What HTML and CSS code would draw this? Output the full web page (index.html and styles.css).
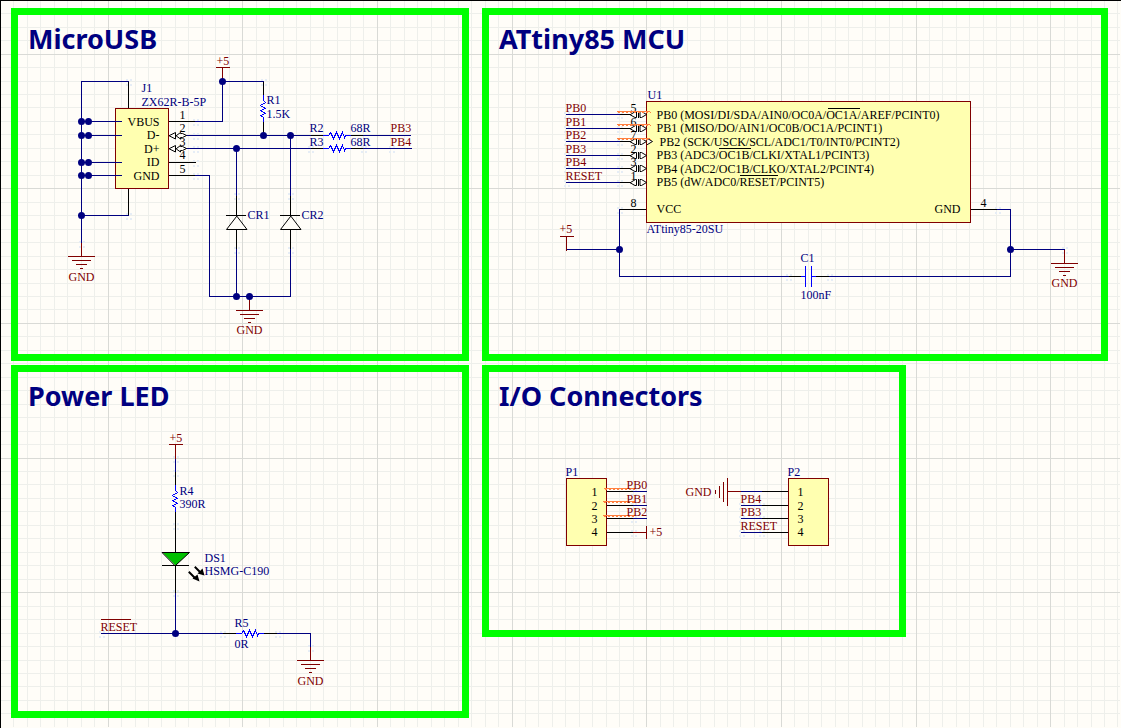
FILE: index.html
```html
<!DOCTYPE html>
<html lang="en">
<head>
<meta charset="utf-8">
<title>ATtiny85 USB board schematic</title>
<link rel="stylesheet" href="styles.css">
</head>
<body>
<svg class="grid" aria-hidden="true"><path class="grid-minor" id="minor"/><path class="grid-major" id="major"/></svg>

<svg class="defs" aria-hidden="true">
  <defs>
    <g id="gnd"><path d="M0 0V13M-13 13H13M-9 17H9M-5 21H5M-1 25H1"/></g>
    <g id="vcc"><path d="M0 0V-14M-6 -14H7"/></g>
    <path id="res-h" d="M0 0H5L7 -3L10 3L13 -3L16 3L19 -3L21 2L22 0H27"/>
    <path id="res-v" d="M0 0V5L2 7L-3 10L2 13L-3 15L2 18L-3 20L0 22V26"/>
    <g id="diode"><path d="M0 -19V0M0 14V33M-10 0H9"/><path class="slant" d="M0 1L-10 14H10Z"/></g>
    <g id="bidir"><path class="slant" d="M-17 0L-12 -3H-11V3H-12ZM-9 -3V3M-7 -3H-6L-1 0L-6 3H-7Z"/></g>
    <g id="usb-io"><path class="slant" d="M1 0L7 -3V3ZM8 0L12 -3V-2H14L18 0L14 2H12V3Z"/></g>
    <path id="hot" d="M-3 -3h2v2h-2zM1 -3h2v2h-2zM-3 2h2v2h-2zM1 2h2v2h-2z"/>
  </defs>
</svg>

<main class="sheet">
  <section class="panel">
    <h2>MicroUSB</h2>
    <svg class="drawing" viewBox="17.5 54.5 444 299" role="img" aria-label="MicroUSB circuit">
      <g class="hot">
        <use href="#hot" x="128" y="81"/><use href="#hot" x="128" y="215"/><use href="#hot" x="195" y="121"/><use href="#hot" x="195" y="135"/><use href="#hot" x="195" y="148"/><use href="#hot" x="195" y="162"/><use href="#hot" x="195" y="175"/><use href="#hot" x="263" y="81"/><use href="#hot" x="236" y="195"/><use href="#hot" x="290" y="195"/><use href="#hot" x="236" y="249"/><use href="#hot" x="290" y="249"/><use href="#hot" x="310" y="148"/><use href="#hot" x="363" y="148"/><use href="#hot" x="391" y="148"/><use href="#hot" x="81" y="243"/>
      </g>
      <rect class="part" x="115" y="108" width="53" height="80"/>
      <path class="wire" d="M128 81H81V243M81 121H121M81 135H121M81 162H121M81 175H121M81 215H128M195 121H222V81H263M186 135H310M186 148H310M363 135H410M363 148H411M195 175H209V296H290V249M290 135V195M236 148V195M236 249V296"/>
      <path class="pin" d="M128 82V107M128 189V214M169 121H194M169 162H195M169 175H194M263 82V95M263 122V134M311 135H322M351 135H362M311 148H322M351 148H362"/>
      <g class="pin"><use href="#diode" x="236" y="215"/><use href="#diode" x="290" y="215"/><use href="#usb-io" x="168" y="135"/><use href="#usb-io" x="168" y="148"/></g>
      <g class="body"><use href="#res-v" x="263" y="95"/><use href="#res-h" x="323" y="135"/><use href="#res-h" x="323" y="148"/></g>
      <g class="power"><use href="#vcc" x="222" y="81"/><use href="#gnd" x="81" y="243"/><use href="#gnd" x="249" y="297"/></g>
      <path class="dots" d="M81 121h0M88 121h0M81 135h0M88 135h0M81 162h0M88 162h0M81 175h0M88 175h0M81 215h0M222 81h0M263 135h0M290 135h0M236 148h0M236 296h0M249 296h0"/>
      <g class="label">
        <text x="141" y="91">J1</text><text x="141" y="105">ZX62R-B-5P</text>
        <text x="266" y="103">R1</text><text x="266" y="117">1.5K</text>
        <text x="309" y="131">R2</text><text x="350" y="131">68R</text>
        <text x="309" y="145">R3</text><text x="350" y="145">68R</text>
        <text x="247" y="218">CR1</text><text x="301" y="218">CR2</text>
      </g>
      <g class="name">
        <text class="end" x="159" y="125">VBUS</text><text class="end" x="159" y="138">D-</text><text class="end" x="159" y="152">D+</text><text class="end" x="159" y="165">ID</text><text class="end" x="159" y="179">GND</text>
        <text x="179" y="118">1</text><text x="179" y="131">2</text><text x="179" y="145">3</text><text x="179" y="158">4</text><text x="179" y="172">5</text>
      </g>
      <g class="net">
        <text x="216" y="64">+5</text><text x="390" y="131">PB3</text><text x="390" y="145">PB4</text>
        <text class="mid" x="81" y="280">GND</text><text class="mid" x="249" y="333">GND</text>
      </g>
    </svg>
  </section>

  <section class="panel">
    <h2>ATtiny85 MCU</h2>
    <svg class="drawing" viewBox="488.5 54.5 612 299" role="img" aria-label="ATtiny85 microcontroller circuit">
      <g class="hot">
        <use href="#hot" x="566" y="114"/><use href="#hot" x="566" y="128"/><use href="#hot" x="566" y="141"/><use href="#hot" x="566" y="155"/><use href="#hot" x="566" y="168"/><use href="#hot" x="566" y="182"/>
        <use href="#hot" x="619" y="114"/><use href="#hot" x="619" y="128"/><use href="#hot" x="619" y="141"/><use href="#hot" x="619" y="155"/><use href="#hot" x="619" y="168"/><use href="#hot" x="619" y="182"/>
        <use href="#hot" x="619" y="209"/><use href="#hot" x="997" y="209"/><use href="#hot" x="788" y="276"/><use href="#hot" x="829" y="276"/><use href="#hot" x="1064" y="249"/>
      </g>
      <rect class="part" x="646" y="101" width="324" height="121"/>
      <path class="pin" d="M620 114H630M620 128H630M620 141H630M620 155H630M620 168H630M620 182H630M620 209H645M971 209H996M789 276H800M815 276H828"/>
      <path class="wire" d="M566 114H619M566 128H619M566 141H619M566 155H619M566 168H619M566 182H619M619 209V276H788M566 249H619M829 276H1010V209H997M1010 249H1064"/>
      <path class="body" d="M801 276H805M805 266V286M811 266V286M811 276H815"/>
      <g class="pin">
        <use href="#bidir" x="647" y="114"/><use href="#bidir" x="647" y="128"/><use href="#bidir" x="647" y="141"/><use href="#bidir" x="647" y="155"/><use href="#bidir" x="647" y="168"/><use href="#bidir" x="647" y="182"/>
        <path class="slant" d="M647 138L652 141L647 144"/>
        <path d="M828 108H859M719 148H750M740 175H777"/>
      </g>
      <g class="power"><use href="#vcc" x="566" y="250"/><use href="#gnd" x="1064" y="250"/></g>
      <path class="dots" d="M619 249h0M1010 249h0"/>
      <g class="label">
        <text x="647" y="98">U1</text><text x="646" y="232">ATtiny85-20SU</text>
        <text x="800" y="261">C1</text><text x="800" y="298">100nF</text>
      </g>
      <g class="name">
        <text x="656" y="118">PB0 (MOSI/DI/SDA/AIN0/OC0A/OC1A/AREF/PCINT0)</text>
        <text x="656" y="131">PB1 (MISO/DO/AIN1/OC0B/OC1A/PCINT1)</text>
        <text x="659" y="145">PB2 (SCK/USCK/SCL/ADC1/T0/INT0/PCINT2)</text>
        <text x="656" y="158">PB3 (ADC3/OC1B/CLKI/XTAL1/PCINT3)</text>
        <text x="656" y="172">PB4 (ADC2/OC1B/CLKO/XTAL2/PCINT4)</text>
        <text x="656" y="185">PB5 (dW/ADC0/RESET/PCINT5)</text>
        <text x="656" y="212">VCC</text><text class="end" x="960" y="212">GND</text>
        <text x="630" y="111">5</text><text x="630" y="125">6</text><text x="630" y="138">7</text><text x="630" y="152">2</text><text x="630" y="165">3</text><text x="630" y="179">1</text><text x="630" y="206">8</text><text x="980" y="206">4</text>
      </g>
      <g class="error"><path d="M617 111H649M617 124H649M617 138H649"/><path class="teeth" d="M617 112H650M617 125H650M617 139H650"/></g>
      <g class="net">
        <text x="565" y="111">PB0</text><text x="565" y="125">PB1</text><text x="565" y="138">PB2</text><text x="565" y="152">PB3</text><text x="565" y="165">PB4</text><text x="565" y="179">RESET</text>
        <text x="559" y="232">+5</text><text class="mid" x="1064" y="286">GND</text>
      </g>
    </svg>
  </section>

  <section class="panel">
    <h2>Power LED</h2>
    <svg class="drawing" viewBox="17.5 411.5 444 299" role="img" aria-label="Power LED circuit">
      <g class="hot"><use href="#hot" x="175" y="458"/><use href="#hot" x="175" y="472"/><use href="#hot" x="175" y="525"/><use href="#hot" x="175" y="592"/><use href="#hot" x="101" y="633"/><use href="#hot" x="222" y="633"/><use href="#hot" x="277" y="633"/><use href="#hot" x="310" y="647"/></g>
      <path class="wire" d="M175 458V472M175 592V633M101 633H222M277 633H310V647"/>
      <path class="pin" d="M175 472V485M175 512V552M175 565V592M162 565H188M223 633H235M263 633H276"/>
      <path class="led" d="M162 552H189L175 565Z"/>
      <path class="ray" d="M195 567L199 571M189 572L194 577"/>
      <path class="tip" d="M204 575L197 573L202 568ZM199 581L192 578L197 574Z"/>
      <g class="body"><use href="#res-v" x="175" y="485"/><use href="#res-h" x="236" y="633"/></g>
      <g class="power"><use href="#vcc" x="175" y="458"/><use href="#gnd" x="310" y="647"/><path d="M101 619H130"/></g>
      <path class="dots" d="M175 633h0"/>
      <g class="label">
        <text x="179" y="494">R4</text><text x="179" y="507">390R</text>
        <text x="204" y="561">DS1</text><text x="204" y="574">HSMG-C190</text>
        <text x="234" y="626">R5</text><text x="234" y="647">0R</text>
      </g>
      <g class="net"><text x="169" y="441">+5</text><text x="100" y="630">RESET</text><text class="mid" x="310" y="684">GND</text></g>
    </svg>
  </section>

  <section class="panel panel-fit">
    <h2>I/O Connectors</h2>
    <svg class="drawing" width="410" viewBox="488.5 411.5 410 218" role="img" aria-label="I/O connectors">
      <g class="hot"><use href="#hot" x="633" y="491"/><use href="#hot" x="633" y="505"/><use href="#hot" x="633" y="518"/><use href="#hot" x="633" y="532"/><use href="#hot" x="741" y="505"/><use href="#hot" x="741" y="518"/><use href="#hot" x="741" y="532"/><use href="#hot" x="761" y="505"/><use href="#hot" x="761" y="518"/><use href="#hot" x="761" y="532"/></g>
      <rect class="part" x="566" y="478" width="40" height="67"/>
      <rect class="part" x="788" y="478" width="40" height="67"/>
      <path class="wire" d="M633 491H646M633 505H646M633 518H646M741 491H761M741 505H761M741 518H761M741 532H761"/>
      <path class="pin" d="M607 491H632M607 505H632M607 518H632M607 532H632M762 491H787M762 505H787M762 518H787M762 532H787"/>
      <path class="power" d="M633 532H646M646 526V538M740 491H727M727 478V505M723 482V501M719 486V497M715 490V493"/>
      <g class="error"><path d="M604 488H634M603 501H634M603 515H634"/><path class="teeth" d="M604 489H634M603 502H634M603 516H634"/></g>
      <g class="label"><text x="565" y="475">P1</text><text x="787" y="475">P2</text></g>
      <g class="name">
        <text x="591" y="495">1</text><text x="591" y="509">2</text><text x="591" y="522">3</text><text x="591" y="535">4</text>
        <text x="797" y="495">1</text><text x="797" y="509">2</text><text x="797" y="522">3</text><text x="797" y="535">4</text>
      </g>
      <g class="net">
        <text x="626" y="488">PB0</text><text x="626" y="502">PB1</text><text x="626" y="515">PB2</text><text x="649" y="535">+5</text>
        <text x="685" y="495">GND</text><text x="740" y="502">PB4</text><text x="740" y="515">PB3</text><text x="740" y="529">RESET</text>
      </g>
    </svg>
  </section>
</main>
<script src="grid.js"></script>
</body>
</html>
```
FILE: styles.css
```css
* { box-sizing: border-box; }

body {
  position: relative;
  margin: 0;
  min-height: 100vh;
  background: #fffdf8;
  border-top: 1px solid #000;
  border-left: 1px solid #000;
  overflow-x: hidden;
}

.grid {
  position: absolute;
  inset: -1px 0 0 -1px;
  z-index: -1;
  width: 100%;
  height: 100%;
  fill: none;
  shape-rendering: crispEdges;
}
.grid-minor { stroke: #eeefeb; }
.grid-major { stroke: #d9dad6; }

.defs { position: absolute; width: 0; height: 0; }

.sheet {
  display: grid;
  grid-template-columns: minmax(0, 458fr) minmax(0, 626fr);
  gap: 4px 13px;
  align-items: start;
  padding: 7px 13px 10px 10px;
}

.panel { border: 7px solid #0f0; }
.panel-fit { justify-self: start; }

.panel h2 {
  margin: 0;
  padding: 4px 10px 0;
  height: 40px;
  color: #000080;
  font: bold 27px/40px "Noto Sans", "Open Sans", sans-serif;
  white-space: nowrap;
}

.drawing {
  display: block;
  width: 100%;
  height: auto;
  fill: none;
  stroke-width: 1px;
  stroke-linecap: square;
  shape-rendering: crispEdges;
}
.panel-fit .drawing { width: 410px; max-width: 100%; }

.part { fill: #ffffb0; stroke: #800000; }
.pin { stroke: #000; }
.wire { stroke: #000080; }
.body { stroke: #0000ff; }
.power { stroke: #800000; }
.error { stroke: #ff8040; }
.teeth { stroke-dasharray: 2 2; stroke-linecap: butt; }
.slant { fill: #fffdf8; shape-rendering: auto; }
.hot { fill: #e6edf6; }
.dots { stroke: #000080; stroke-width: 7px; stroke-linecap: round; shape-rendering: auto; }
.led { fill: #00c000; stroke: #000; stroke-width: 1px; shape-rendering: auto; }
.ray { stroke: #000; stroke-width: 2px; shape-rendering: auto; }
.tip { fill: #000; shape-rendering: auto; }

.drawing text {
  font: 12px "Liberation Serif", "Times New Roman", serif;
  white-space: pre;
}
.label text { fill: #000080; }
.name text { fill: #000; }
.net text { fill: #800000; }
.end { text-anchor: end; }
.mid { text-anchor: middle; }
.label, .name, .net { stroke: none; }
```
FILE: grid.js
```js
// Ten minor divisions make one major division of the sheet grid.
const STEP = 13.465;

function drawGrid() {
  const width = window.innerWidth;
  const height = document.documentElement.scrollHeight;
  const paths = { minor: "", major: "" };

  const add = (vertical, limit, origin, majorIndex) => {
    for (let k = 1; origin + STEP * k < limit; k++) {
      const at = Math.floor(origin + STEP * k) + 0.5;
      const kind = k % 10 === majorIndex ? "major" : "minor";
      paths[kind] += vertical ? `M${at} 0V${height}` : `M0 ${at}H${width}`;
    }
  };

  add(true, width, 0.38, 8);
  add(false, height, 0.24, 4);
  document.getElementById("minor").setAttribute("d", paths.minor);
  document.getElementById("major").setAttribute("d", paths.major);
}

drawGrid();
window.addEventListener("resize", drawGrid);
```
